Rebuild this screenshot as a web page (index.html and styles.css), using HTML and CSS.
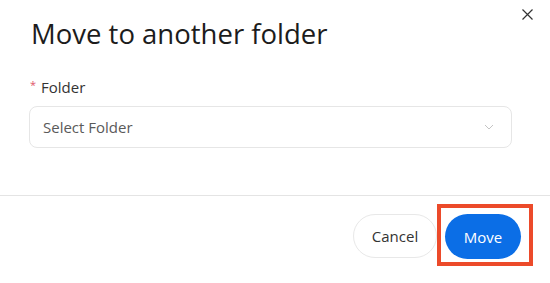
FILE: index.html
```html
<!DOCTYPE html>
<html>
<head>
<meta charset="utf-8">
<link rel="stylesheet" href="styles.css">
</head>
<body>
<div class="modal">
  <button class="close" aria-label="Close">
    <svg width="11" height="11" viewBox="0 0 11 11"><path d="M0.5 0.5L10.5 10.5M10.5 0.5L0.5 10.5" stroke="#333" stroke-width="1.2" fill="none"/></svg>
  </button>
  <div class="header">
    <h1 class="title">Move to another folder</h1>
  </div>
  <div class="body">
    <label class="label"><span class="req">*</span>Folder</label>
    <div class="select">
      <span class="placeholder">Select Folder</span>
      <svg class="chev" width="10" height="6" viewBox="0 0 10 6"><path d="M1 1L5 5L9 1" stroke="#c4c4c4" stroke-width="1" fill="none"/></svg>
    </div>
  </div>
  <div class="footer">
    <button class="btn cancel">Cancel</button>
    <div class="highlight">
      <button class="btn primary">Move</button>
    </div>
  </div>
</div>
</body>
</html>
```
FILE: styles.css
```css
html, body {
  margin: 0;
  padding: 0;
  background: #fff;
}
body {
  font-family: "Open Sans", "Noto Sans", sans-serif;
  width: 550px;
  height: 283px;
  overflow: hidden;
}
.modal {
  position: relative;
  width: 550px;
}
.close {
  position: absolute;
  top: 9px;
  right: 17px;
  width: 11px;
  height: 11px;
  padding: 0;
  border: 0;
  background: none;
  display: flex;
}
.header {
  padding: 16px 31px 0;
}
.title {
  margin: 0;
  font-size: 27.5px;
  line-height: 36px;
  font-weight: 400;
  color: #1c1c1c;
}
.body {
  padding: 24px 38px 47px 29px;
}
.label {
  display: flex;
  align-items: flex-start;
  font-size: 15px;
  line-height: 22px;
  color: #333;
  margin-bottom: 8px;
}
.req {
  color: #e0566a;
  font-size: 11px;
  line-height: 14px;
  margin: 2px 5px 0 1px;
}
.select {
  height: 40px;
  border: 1px solid #e6e6e6;
  border-radius: 8px;
  display: flex;
  align-items: center;
  justify-content: space-between;
  padding: 0 17px 0 13px;
}
.placeholder {
  font-size: 15px;
  color: #5a5a5a;
}
.chev {
  display: block;
}
.footer {
  border-top: 1px solid #e4e4e4;
  display: flex;
  justify-content: flex-end;
  align-items: flex-start;
  padding: 8px 17px 0 0;
}
.btn {
  font-family: "Open Sans", "Noto Sans", sans-serif;
  font-size: 15px;
  border-radius: 23px;
  height: 45px;
  cursor: pointer;
}
.cancel {
  margin-top: 10px;
  width: 84px;
  height: 44px;
  background: #fff;
  color: #333;
  border: 1px solid #e8e8e8;
}
.highlight {
  border: 4px solid #ec4a2a;
  padding: 6px 8px 3px 4px;
  display: flex;
}
.primary {
  width: 76px;
  background: #0b6ee6;
  color: #fff;
  border: 0;
}
```
